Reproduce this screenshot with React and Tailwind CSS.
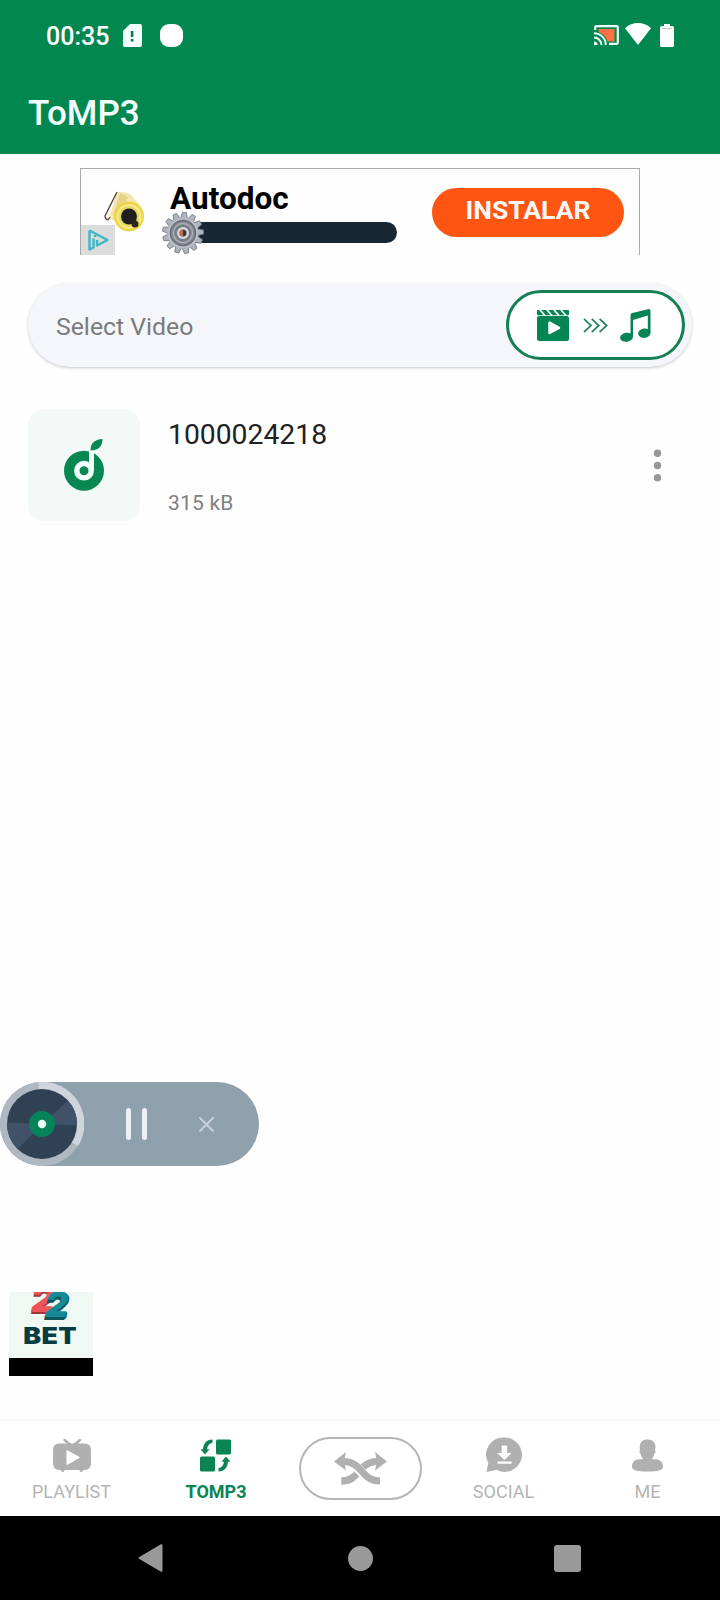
import React from 'react';

const StatusBar = () => (
  <div className="flex h-[70px] items-center pl-[46px] pr-[46px] text-white">
    <span className="w-[77px] text-[25px] font-medium leading-none pt-[3px]">00:35</span>
    <svg width="19" height="23" viewBox="0 0 19 23">
      <path d="M7 0h10a2 2 0 0 1 2 2v19a2 2 0 0 1-2 2H2a2 2 0 0 1-2-2V7z" fill="#f4fffb" />
      <path d="M7.8 7h2.6v6H7.8zM7.8 15h2.6v2.6H7.8z" fill="#0a7d50" />
    </svg>
    <div className="ml-[18px] h-[23px] w-[23px] rounded-[9px] bg-white" />
    <div className="ml-auto flex items-center">
      <svg width="25" height="20" viewBox="0 0 25 20" fill="none">
        <path d="M4.5 4h16v12.5h-7.2A13 13 0 0 0 4.5 7z" fill="#ff7043" />
        <path d="M1.2 5V2.2a1 1 0 0 1 1-1h20.6a1 1 0 0 1 1 1v15.6a1 1 0 0 1-1 1H15" stroke="#f0fffa" strokeWidth="2.2" />
        <path d="M0 8.2A11.8 11.8 0 0 1 11.8 20M0 12.6A7.4 7.4 0 0 1 7.4 20" stroke="#f0fffa" strokeWidth="2" />
        <path d="M0 16.4A3.6 3.6 0 0 1 3.6 20H0z" fill="#f0fffa" />
      </svg>
      <svg className="ml-1.5 -mt-0.5" width="26" height="22" viewBox="0 0 26 22">
        <path d="M0 5.2C7.5-1.6 18.5-1.6 26 5.2L13 22z" fill="#fff" />
      </svg>
      <svg className="ml-[9px]" width="14" height="23" viewBox="0 0 14 23">
        <path d="M4 0h6v2h2.5A1.5 1.5 0 0 1 14 3.5v18a1.5 1.5 0 0 1-1.5 1.5h-11A1.5 1.5 0 0 1 0 21.5v-18A1.5 1.5 0 0 1 1.5 2H4z" fill="#fff" />
        <path d="M2.5 4.5h9" stroke="#b4c9c0" strokeWidth="1.2" />
      </svg>
    </div>
  </div>
);

const Gear = () => (
  <svg className="relative mt-px shrink-0" width="42" height="42" viewBox="-21 -21 42 42">
    {Array.from({ length: 13 }, (_, i) => (
      <path
        key={i}
        d="M-3.4-14L-2-20.5H2L3.4-14z"
        fill="#aeb3bd"
        stroke="#737984"
        strokeWidth="0.8"
        transform={`rotate(${(i * 360) / 13 + 4})`}
      />
    ))}
    <circle r="15.5" fill="#b9bdc6" />
    <circle r="12.5" fill="#858a95" stroke="#686d77" strokeWidth="1.5" />
    <circle r="9.5" fill="#777c87" stroke="#a9aeb7" strokeWidth="1.5" />
    <circle r="6" fill="#d8dadd" />
    <circle r="3.5" fill="#333a40" />
    <path d="M0-3.5a3.5 3.5 0 0 0 0 7z" fill="#c26b50" />
  </svg>
);

const AdBanner = () => (
  <div className="mx-auto mt-[14px] flex h-[87px] w-[560px] border border-b-0 border-[#a8a8ab] bg-[#fefefe]">
    <div className="relative w-[80px]">
      <svg className="absolute left-[22px] top-[20px]" width="44" height="46" viewBox="0 0 44 46">
        <path d="M14 3L6 29l17 9 16-20L27 5q-7-3-13-2z" fill="#f3e6ae" />
        <path d="M17 4l8 4-9 20-6-2z" fill="#e8d28c" />
        <circle cx="26" cy="27.5" r="15" fill="#ecd545" />
        <circle cx="26" cy="27.5" r="12.5" fill="#f4ea8c" />
        <circle cx="26" cy="27.5" r="10.5" fill="#ead860" />
        <circle cx="26" cy="27.5" r="8" fill="#211f1d" />
        <circle cx="32" cy="35" r="3.5" fill="#2e2916" />
        <path d="M14 3L2 27q0 3 3 4l2-3" stroke="#50462e" strokeWidth="1.3" fill="none" />
      </svg>
      <div className="absolute bottom-0 left-0 flex h-[30px] w-[34px] items-center justify-center bg-[#dcdcdc]">
        <svg width="21" height="22" viewBox="0 0 21 22" fill="none" stroke="#3db8c9" strokeLinejoin="round">
          <path d="M1.5 1.5v19L5.500 18.500V9.500M1.500 1.500l18 9.500L9 16.500V11" strokeWidth="2.4" />
          <path d="M7 6v2" strokeWidth="2.4" />
        </svg>
      </div>
    </div>
    <div className="w-[271px]">
      <div className="ml-[9px] mt-[13px] h-[29px] text-[31.5px] font-bold leading-[34px] text-black">
        Autodoc
      </div>
      <div className="flex items-center pl-px">
        <Gear />
        <div className="-ml-[14px] h-[21px] w-[207px] rounded-r-full bg-[#172734]" />
      </div>
    </div>
    <div className="mt-[19px] flex h-[49px] w-[192px] justify-center rounded-full bg-[#ff5512] text-[26.5px] font-bold leading-[43px] text-[#fff9f5]">
      INSTALAR
    </div>
  </div>
);

const SelectVideo = () => (
  <div className="mx-auto mt-[28px] flex h-[84px] w-[664px] items-center rounded-full bg-[#f5f6fa] pl-[28px] pr-[7px] shadow-[0_1px_3px_rgba(0,0,0,0.22)]">
    <span className="pt-[3px] text-[24.8px] text-[#7a7b7d]">Select Video</span>
    <div className="ml-auto flex h-[70px] w-[179px] items-center rounded-full border-[3px] border-[#168055] bg-white pl-[28px]">
      <svg width="32" height="31" viewBox="0 0 32 31">
        <rect y="6" width="32" height="25" rx="2" fill="#038653" />
        <rect width="32" height="5.2" rx="1" fill="#038653" />
        <path d="M3 0l5 5.5M10 0l5 5.5M17 0l5 5.5M24 0l5 5.5" stroke="#fff" strokeWidth="1.8" />
        <path d="M12.500 12.5v10.5l9.500-5.2z" fill="#fff" stroke="#fff" strokeWidth="2.500" strokeLinejoin="round" />
      </svg>
      <svg className="ml-[14px]" width="25" height="15" viewBox="0 0 25 15" fill="none" stroke="#268a61" strokeWidth="1.8">
        <path d="M1 .8l7 6.7-7 6.7M8.8.8l7 6.7-7 6.7M16.6.8l7 6.7-7 6.7" />
      </svg>
      <svg className="ml-[12px]" width="31" height="33" viewBox="0 0 31 33" fill="#078453">
        <path d="M10.5 6.5Q10.5 4.6 12.3 4.1L28 .2Q30.5-.3 30.5 2v22h-2.7V6.500L13 11v17h-2.5z" />
        <ellipse cx="6.5" cy="28.3" rx="6.4" ry="4.5" transform="rotate(-8 6.5 28.3)" />
        <ellipse cx="24.3" cy="24.2" rx="6.2" ry="4.7" transform="rotate(-8 24.3 24.2)" />
      </svg>
    </div>
  </div>
);

const FileRow = () => (
  <div className="mt-[42px] flex h-[112px] pl-7">
    <div className="h-[112px] w-[112px] rounded-2xl bg-[#f2f9f7] pl-[36px] pt-[30px]">
      <svg width="40" height="52" viewBox="0 0 40 52">
        <circle cx="20" cy="31.7" r="20" fill="#078751" />
        <circle cx="20" cy="31.7" r="7.2" fill="none" stroke="#f0fffa" strokeWidth="5.4" />
        <path d="M25 10h5v22h-5z" fill="#f0fffa" />
        <path d="M26.5 11.500C26.5 4 30.5.5 38.5 0 38.5 7 34.5 11.5 26.5 11.5z" fill="#078751" />
      </svg>
    </div>
    <div className="ml-7 flex flex-col">
      <span className="mt-[10px] text-[28.3px] leading-8 text-[#202124]">1000024218</span>
      <span className="mt-[40px] text-[21px] leading-6 tracking-[0.2px] text-[#808080]">315 kB</span>
    </div>
    <svg className="ml-auto mr-[58px] mt-[40px]" width="9" height="33" viewBox="0 0 9 33" fill="#979797">
      <circle cx="4.5" cy="4.2" r="3.7" />
      <circle cx="4.5" cy="16.5" r="3.7" />
      <circle cx="4.5" cy="28.8" r="3.7" />
    </svg>
  </div>
);

const MiniPlayer = () => (
  <div className="absolute left-0 top-[1082px] flex h-[84px] w-[259px] items-center rounded-full bg-[#8fa1ac]">
    <svg width="84" height="84" viewBox="-42 -42 84 84">
      <circle r="42" fill="#afb8c1" />
      <path d="M0 0L-3.5-42A42 42 0 0 1 36 22z" fill="#d0d4dd" />
      <circle r="35" fill="#304153" />
      <path d="M0 0L26-23.5A35 35 0 0 1 35 1.5zM0 0l-35-1.5A35 35 0 0 0-24 25z" fill="#3f5268" />
      <circle r="13" fill="#068459" />
      <circle r="4.2" fill="#eafff8" />
    </svg>
    <div className="ml-[42px] h-[32px] w-[5px] rounded-full bg-[#ecf1f8]" />
    <div className="ml-[11px] h-[32px] w-[5px] rounded-full bg-[#ecf1f8]" />
    <svg className="ml-[52px]" width="15" height="15" viewBox="0 0 15 15" stroke="#c5cfd9" strokeWidth="2" strokeLinecap="round">
      <path d="M1 1l13 13M14 1L1 14" />
    </svg>
  </div>
);

const BetBubble = () => (
  <div className="absolute left-[9px] top-[1292px] h-[84px] w-[84px] overflow-hidden border-b-[18px] border-black bg-[#eff8f2] font-['Inter',sans-serif] font-black leading-none">
    <div className="flex h-[32px] items-start pl-[22px] text-[36px] italic leading-[36px]">
      <span className="-mt-[11px] w-[14px] text-[#ec545a] [text-shadow:1px_1px_0_#a5333a,0_2px_0_#a5333a]">2</span>
      <span className="-mt-[6px] text-[#158a96] [text-shadow:1px_1px_0_#0b5661,0_2px_0_#0b5661,-1px_3px_0_#0b5661]">2</span>
    </div>
    <div className="w-[45px] origin-left scale-x-[1.19] pl-[12px] text-[22.5px] leading-[24px] tracking-[0.3px] text-[#073c42]">
      BET
    </div>
  </div>
);

const PlaylistIcon = () => (
  <svg width="38" height="33" viewBox="0 0 38 33">
    <path d="M11.5 1l6 5M27 1l-6 5" stroke="#b0b0b0" strokeWidth="2.5" strokeLinecap="round" />
    <rect y="4.5" width="38" height="26.5" rx="6" fill="#b0b0b0" />
    <path d="M8 30h3.5l-1 2.5H9zM26.5 30h3.5l-1 2.5h-1.5z" fill="#b0b0b0" stroke="#b0b0b0" />
    <path d="M14 11.5v14l12.5-7z" fill="#fff" stroke="#fff" strokeLinejoin="round" />
  </svg>
);

const ConvertIcon = () => (
  <svg className="-ml-px" width="31" height="33" viewBox="0 0 31 33" fill="#0b8453">
    <rect x="16" y="0.5" width="15" height="15" rx="1.5" />
    <rect y="17.5" width="15" height="15" rx="1.5" />
    <path d="M12.5.5v3.3C9 4.5 7.5 7 7 10.2h2.5L5 15.5.5 10.2H3C3.5 4.5 6.5.5 12.5.5z" />
    <path d="M18.5 32.5v-3.3c3.5-.7 5-3.2 5.500-6.400h-2.500L26 17.500l4.500 5.300H28c-.5 5.700-3.500 9.700-9.500 9.700z" />
  </svg>
);

const SocialIcon = () => (
  <svg width="36" height="36" viewBox="0 0 36 36">
    <path d="M18.5.5a17.2 17.2 0 1 1-8 32.3L.5 35l1.8-9A17.2 17.2 0 0 1 18.5.5z" fill="#b0b0b0" />
    <path d="M15.7 8.5h5.5v7.5h4.500l-7.200 7-7.300-7h4.500zM11.500 24.500h14v2.200h-14z" fill="#fff" />
  </svg>
);

const MeIcon = () => (
  <svg className="-ml-px" width="31" height="33" viewBox="0 0 31 33" fill="#b0b0b0">
    <path d="M9 3.5C11 .5 13 .5 15.5.5c5 0 8 3 8 7.5l-.5 3c1 1 .5 3.5-.8 4-.3 2-1.2 3.5-2.2 4.5 0 .8 1.5.8 4 .8 4.5.2 7 3.2 7 7.2 0 3.5-3 5-15.500 5S0 31 0 27.500c0-4 2.500-7 7-7.200 2.500 0 4 0 4-.8-1-1-1.900-2.500-2.200-4.500-1.300-.5-1.800-3-.8-4C7.500 8 7.500 5.500 9 3.500z" />
  </svg>
);

const ShuffleIcon = () => (
  <svg className="ml-px" width="53" height="34" viewBox="0 0 53 34" fill="none">
    <path d="M7.5 29C26 29 24 10 43 9.5" stroke="#b0b0b0" strokeWidth="7" />
    <path d="M53 9.5L41 0l2 9.5-2 9z" fill="#b0b0b0" />
    <path d="M19 12.5C29 18 29 29 46 29" stroke="#fff" strokeWidth="9.500" />
    <path d="M7.500 29Q15 29 19 25.500" stroke="#b0b0b0" strokeWidth="7" />
    <path d="M10 9.5C29 10 27 29 46 29" stroke="#b0b0b0" strokeWidth="7" />
    <path d="M0 9.5L12 0l-2 9.5 2 9z" fill="#b0b0b0" />
  </svg>
);

const NavItem = ({ label, icon, active }) => (
  <div className="flex flex-1 flex-col items-center">
    <div className="mt-4 flex h-9 items-center">{icon}</div>
    <span
      className={`mt-[7px] text-[18px] leading-6 ${
        active ? 'font-bold text-[#0b8453]' : '-ml-px text-[#b4b4b4]'
      }`}
    >
      {label}
    </span>
  </div>
);

const BottomNav = () => (
  <div className="flex h-[97px] border-t-2 border-[#f7f7f7] bg-white">
    <NavItem label="PLAYLIST" icon={<PlaylistIcon />} />
    <NavItem label="TOMP3" icon={<ConvertIcon />} active />
    <div className="flex flex-1 items-start justify-center pt-4">
      <div className="flex h-[63px] w-[123px] items-center justify-center rounded-full border-2 border-[#b5b5b5]">
        <ShuffleIcon />
      </div>
    </div>
    <NavItem label="SOCIAL" icon={<SocialIcon />} />
    <NavItem label="ME" icon={<MeIcon />} />
  </div>
);

const SystemNav = () => (
  <div className="flex h-[84px] items-center bg-black pl-[138px]">
    <svg width="25" height="28" viewBox="0 0 25 28">
      <path d="M1.5 14L23.5 1.2v25.6z" fill="#999" stroke="#999" strokeWidth="2" strokeLinejoin="round" />
    </svg>
    <div className="ml-[185px] h-[25px] w-[25px] rounded-full bg-[#999]" />
    <div className="ml-[181px] h-[27px] w-[27px] rounded-[3px] bg-[#999]" />
  </div>
);

const App = () => {
  return (
    <div className="relative flex h-[1600px] w-[720px] flex-col overflow-hidden bg-[#fefefe] font-['Roboto',sans-serif]">
      <header className="h-[154px] bg-[#038751]">
        <StatusBar />
        <h1 className="pl-7 pt-6 text-[35px] font-medium leading-10 text-[#f4fffb]">ToMP3</h1>
      </header>
      <AdBanner />
      <SelectVideo />
      <main className="flex-1">
        <FileRow />
      </main>
      <BottomNav />
      <SystemNav />
      <MiniPlayer />
      <BetBubble />
    </div>
  );
};

export default App;
